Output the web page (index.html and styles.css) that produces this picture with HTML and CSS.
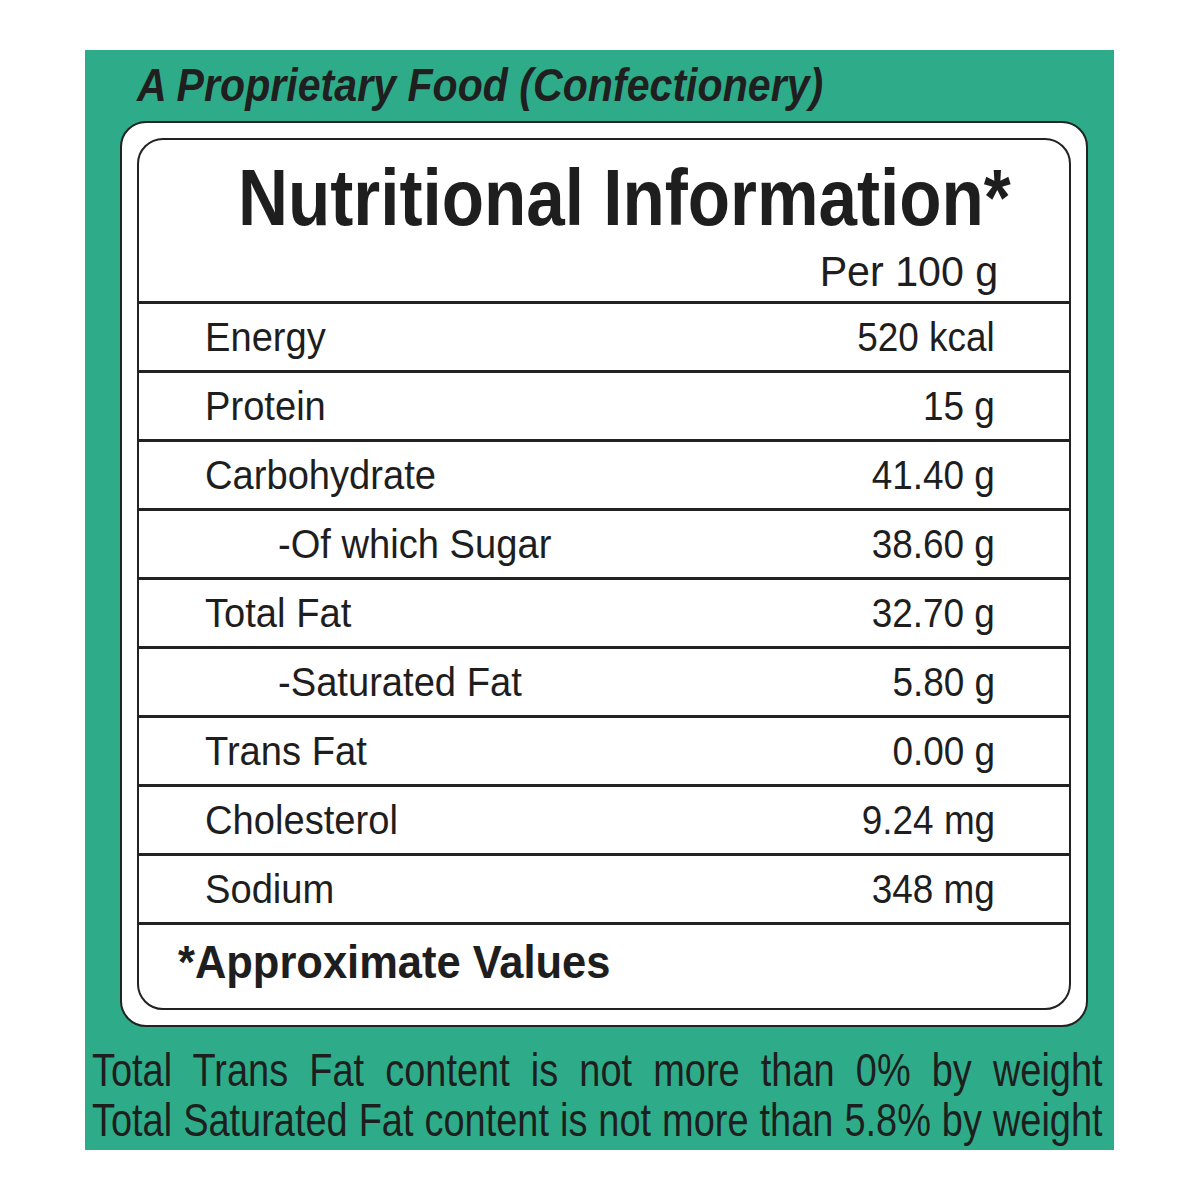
FILE: index.html
```html
<!DOCTYPE html>
<html>
<head>
<meta charset="utf-8">
<link rel="stylesheet" href="styles.css">
</head>
<body>
<div class="panel">
  <div class="subtitle"><span>A Proprietary Food (Confectionery)</span></div>
  <div class="outer">
    <div class="inner">
      <div class="head">
        <div class="title"><span>Nutritional Information*</span></div>
        <div class="per"><span>Per 100 g</span></div>
      </div>
      <div class="row"><span class="label">Energy</span><span class="val">520 kcal</span></div>
      <div class="row"><span class="label">Protein</span><span class="val">15 g</span></div>
      <div class="row"><span class="label">Carbohydrate</span><span class="val">41.40 g</span></div>
      <div class="row"><span class="label sub">-Of which Sugar</span><span class="val">38.60 g</span></div>
      <div class="row"><span class="label">Total Fat</span><span class="val">32.70 g</span></div>
      <div class="row"><span class="label sub">-Saturated Fat</span><span class="val">5.80 g</span></div>
      <div class="row"><span class="label">Trans Fat</span><span class="val">0.00 g</span></div>
      <div class="row"><span class="label">Cholesterol</span><span class="val">9.24 mg</span></div>
      <div class="row"><span class="label">Sodium</span><span class="val">348 mg</span></div>
      <div class="foot"><span>*Approximate Values</span></div>
    </div>
  </div>
  <div class="notes">
    <p>Total Trans Fat content is not more than 0% by weight</p>
    <p>Total Saturated Fat content is not more than 5.8% by weight</p>
  </div>
</div>
</body>
</html>
```
FILE: styles.css
```css
html, body {
  margin: 0;
  padding: 0;
  background: #ffffff;
  overflow: hidden;
}
body {
  font-family: "Liberation Sans", Arial, sans-serif;
  color: #1e1e1e;
}
.panel {
  margin: 50px 0 0 85px;
  width: 1029px;
  height: 1100px;
  background: #2eac89;
  box-sizing: border-box;
  padding: 0 26px 0 35px;
  display: flex;
  flex-direction: column;
  overflow: hidden;
}
.subtitle {
  font-weight: bold;
  font-style: italic;
  font-size: 46px;
  line-height: 71px;
  height: 71px;
  padding-left: 17px;
  white-space: nowrap;
  color: #1f1f1f;
}
.subtitle span {
  display: inline-block;
  transform: scaleX(0.894);
  transform-origin: left center;
}
.outer {
  background: #fff;
  border: 2px solid #222;
  border-radius: 26px;
  padding: 15px;
  height: 906px;
  box-sizing: border-box;
}
.inner {
  border: 2px solid #222;
  border-radius: 26px;
  height: 872px;
  box-sizing: border-box;
  display: flex;
  flex-direction: column;
  overflow: hidden;
}
.head {
  height: 161px;
  box-sizing: border-box;
}
.title {
  font-weight: bold;
  font-size: 80px;
  line-height: 1;
  padding-top: 18px;
  padding-left: 99px;
  white-space: nowrap;
}
.title span {
  display: inline-block;
  transform: scaleX(0.865);
  transform-origin: left center;
}
.per {
  font-size: 42px;
  line-height: 1;
  text-align: right;
  padding-right: 71px;
  margin-top: 13px;
}
.per span {
  display: inline-block;
  transform: scaleX(0.98);
  transform-origin: right center;
}
.row {
  height: 69px;
  border-top: 3px solid #222;
  box-sizing: border-box;
  display: flex;
  align-items: center;
  justify-content: space-between;
  padding: 0 74px 0 66px;
  font-size: 41px;
  white-space: nowrap;
}
.label {
  display: inline-block;
  transform: scaleX(0.93);
  transform-origin: left center;
}
.val {
  display: inline-block;
  transform: scaleX(0.9);
  transform-origin: right center;
}
.label.sub {
  margin-left: 73px;
}
.foot {
  border-top: 3px solid #222;
  flex: 1;
  font-weight: bold;
  font-size: 46px;
  padding: 14px 0 0 39px;
  line-height: 1;
  white-space: nowrap;
}
.foot span {
  display: inline-block;
  transform: scaleX(0.945);
  transform-origin: left center;
}
.notes {
  margin-left: -28px;
  margin-right: -26px;
  padding-top: 18px;
  font-size: 46px;
  overflow: hidden;
  height: 110px;
}
.notes p {
  margin: 0;
  width: 1225px;
  line-height: 50px;
  text-align: justify;
  text-align-last: justify;
  white-space: nowrap;
  transform: scaleX(0.825);
  transform-origin: left center;
}
```
